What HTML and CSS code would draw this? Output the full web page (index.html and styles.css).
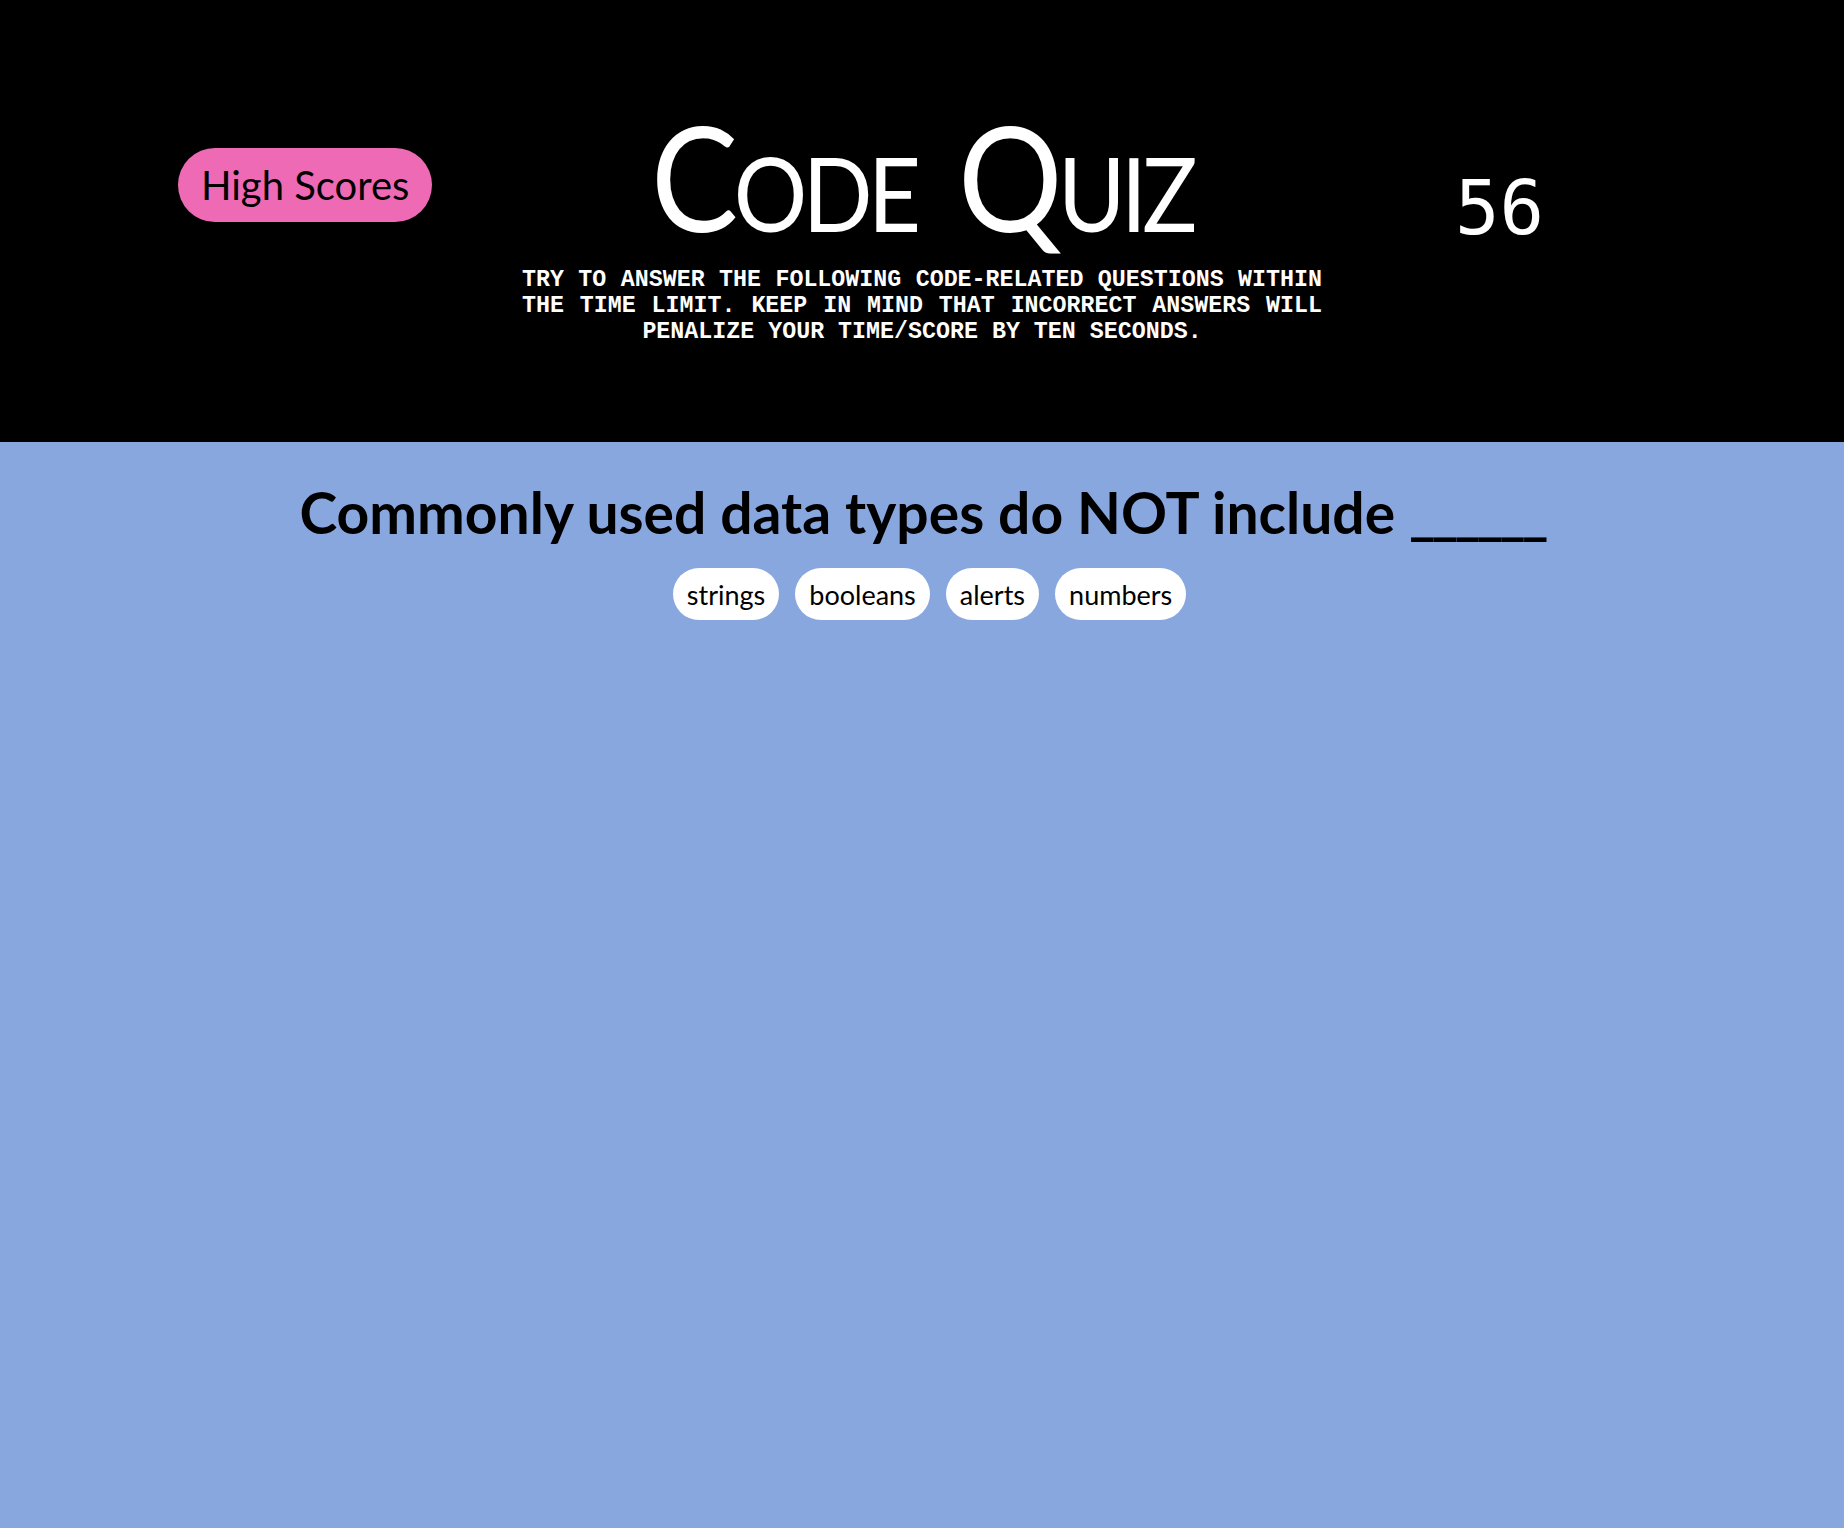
FILE: index.html
```html
<!DOCTYPE html>
<html lang="en">
<head>
<meta charset="utf-8">
<title>Code Quiz</title>
<link rel="stylesheet" href="styles.css">
</head>
<body>
<header class="top">
  <div class="top-left">
    <button class="scores-btn">High Scores</button>
  </div>
  <div class="top-center">
    <h1 class="title">Code Quiz</h1>
    <p class="intro">Try to answer the following code-related questions within the time limit. Keep in mind that incorrect answers will penalize your time/score by ten seconds.</p>
  </div>
  <div class="top-right">
    <span class="timer">56</span>
  </div>
</header>
<main class="quiz">
  <h2 class="question">Commonly used data types do NOT include <span class="blank">______</span></h2>
  <div class="answers">
    <button class="answer">strings</button>
    <button class="answer">booleans</button>
    <button class="answer">alerts</button>
    <button class="answer">numbers</button>
  </div>
</main>
</body>
</html>
```
FILE: styles.css
```css
html, body {
  margin: 0;
  padding: 0;
}
body {
  background: #89a7df;
  min-height: 1528px;
  font-family: "Lato", "Open Sans", sans-serif;
}
.top {
  background: #000;
  height: 442px;
  display: grid;
  grid-template-columns: 1fr 800px 1fr;
  color: #fff;
}
.top-left {
  padding-left: 178px;
  padding-top: 148px;
}
.scores-btn {
  font-family: "Lato", "Open Sans", sans-serif;
  font-size: 40px;
  height: 74px;
  padding: 0 23px;
  border: none;
  border-radius: 37px;
  background: #ef6ab4;
  color: #000;
  cursor: pointer;
}
.top-center {
  text-align: center;
}
.title {
  margin: 104px 0 0;
  font-size: 145px;
  line-height: 145px;
  font-weight: 400;
  font-variant: small-caps;
  letter-spacing: -5px;
  word-spacing: 14px;
  white-space: nowrap;
  transform: scaleX(0.9);
}
.intro {
  margin: 18px 0 0;
  font-family: "Liberation Mono", "Courier New", monospace;
  font-weight: 700;
  font-size: 23.3px;
  line-height: 26px;
  text-transform: uppercase;
  text-align: justify;
  text-align-last: center;
}
.top-right {
  padding-left: 133px;
  padding-top: 171px;
}
.timer {
  display: block;
  font-family: "DejaVu Sans Mono", monospace;
  font-size: 74px;
  line-height: 74px;
}
.quiz {
  text-align: center;
  padding-top: 34px;
}
.question {
  margin: 0;
  font-size: 57px;
  line-height: 72px;
  font-weight: 700;
  color: #000;
}
.blank {
  letter-spacing: -4px;
}
.answers {
  margin-top: 20px;
  padding-left: 15px;
  display: flex;
  justify-content: center;
  gap: 16px;
}
.answer {
  font-family: "Lato", "Open Sans", sans-serif;
  font-size: 27px;
  height: 52px;
  padding: 0 14px;
  border: none;
  border-radius: 26px;
  background: #fff;
  color: #000;
  cursor: pointer;
}
```
